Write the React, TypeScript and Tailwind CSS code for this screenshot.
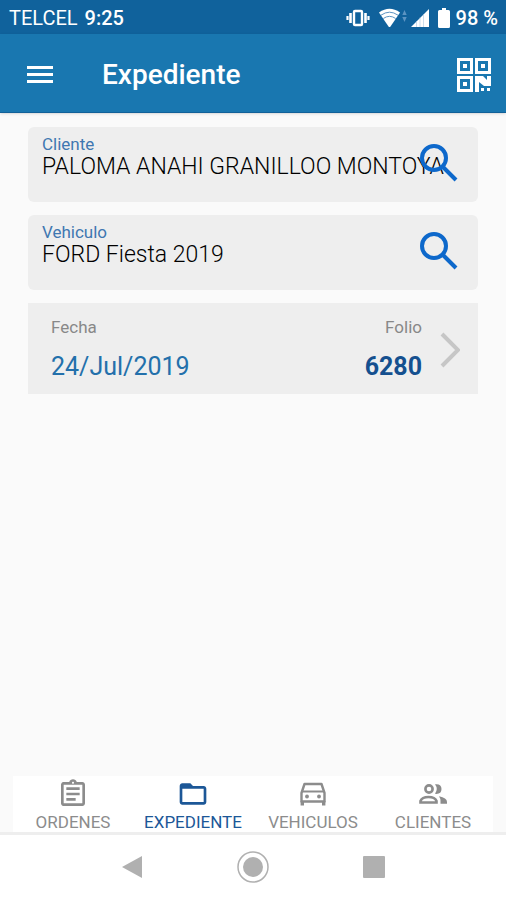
import type { ReactNode } from 'react';
import clsx from 'clsx';
import { MdFolderOpen, MdOutlineAssignment } from 'react-icons/md';

function VibrateIcon() {
  return (
    <svg viewBox="0 0 24 18" className="h-[18px] w-6" fill="none" stroke="currentColor">
      <rect x="8" y="2" width="8" height="14" rx="1" strokeWidth="2.4" />
      <path d="M4.500 4v10M19.500 4v10" strokeWidth="2.6" />
      <path d="M1.500 7v4M22.500 7v4" strokeWidth="2.2" />
    </svg>
  );
}

function WifiIcon() {
  return (
    <svg viewBox="0 0 28 20" className="h-5 w-7">
      <path d="M0 4.500Q10.500-3 21 4.500L11.500 18.500Q10.500 19.500 9.500 18.500Z" fill="#fff" />
      <path
        d="M2 7.200Q10.500 1.200 19 7.200M4.300 10.500Q10.500 6.200 16.700 10.500"
        fill="none"
        stroke="#5c94c2"
        strokeWidth="1"
      />
      <path d="M25.500 2l2.200 5h-4.400zM25.500 14l2.200-5h-4.400z" fill="#5c94c2" />
    </svg>
  );
}

function SignalIcon() {
  return (
    <svg viewBox="0 0 18 18" className="h-[18px] w-[18px]">
      <path d="M0 18L18 0V18Z" fill="#fff" />
      <path d="M5.500 12v6M9 8.500v9.500M12.500 5v13" stroke="#a9c6df" strokeWidth="0.6" />
    </svg>
  );
}

function BatteryIcon() {
  return (
    <svg viewBox="0 0 12 20" className="h-5 w-3" fill="currentColor">
      <path d="M4 0h4v2h2.500Q12 2 12 3.500V18.500Q12 20 10.500 20h-9Q0 20 0 18.500V3.500Q0 2 1.500 2H4Z" />
    </svg>
  );
}

function QrIcon() {
  return (
    <svg viewBox="0 0 36 36" className="h-9 w-9" fill="currentColor">
      <path
        fillRule="evenodd"
        d="M1 1h16v16H1zM4 4v10h10V4zM19 1h16v16H19zM22 4v10h10V4zM1 19h16v16H1zM4 22v10h10V22z"
      />
      <path d="M7 7h4v4H7zM25 7h4v4h-4zM7 25h4v4H7z" />
      <path d="M19 19h8l4 4v-4h4v10h-7l-5-4v10h-4zM25 31h3v3h-3zM31 31h3v3h-3z" />
    </svg>
  );
}

function SearchIcon() {
  return (
    <svg viewBox="0 0 40 40" className="h-10 w-10" fill="none" stroke="currentColor">
      <circle cx="15" cy="15" r="12" strokeWidth="4" />
      <path d="M24.500 24.500L37 37" strokeWidth="4" />
    </svg>
  );
}

function CarIcon() {
  return (
    <svg viewBox="0 0 26 24" className="h-6 w-[26px]" fill="none" stroke="currentColor">
      <path d="M4.500 2h17L24.500 11v8.500h-23V11z" strokeWidth="2.400" strokeLinejoin="round" />
      <path d="M3 9.500h20" strokeWidth="2" />
      <path d="M2.300 19v4.500M23.700 19v4.500" strokeWidth="3.400" />
      <g fill="currentColor" stroke="none">
        <circle cx="7" cy="14.500" r="1.900" />
        <circle cx="19" cy="14.500" r="1.900" />
      </g>
    </svg>
  );
}

function PeopleIcon() {
  return (
    <svg viewBox="0 0 28 20" className="h-5 w-7" fill="none" stroke="currentColor">
      <circle cx="10" cy="5" r="3.600" strokeWidth="2.600" />
      <path d="M1.500 18.500v-1.500Q3 13 9.500 13T17.500 17v1.500z" strokeWidth="2.600" />
      <g fill="currentColor" stroke="none">
        <path d="M16 .3Q22.500-.5 22.500 5T16 9.800Q19.500 5 16 .3Z" />
        <path d="M20 12.300Q28 14 28 18v1.700h-6.500V17Q21.500 14.500 20 12.300Z" />
      </g>
    </svg>
  );
}

function SearchField({ id, label, value }: { id: string; label: string; value: string }) {
  return (
    <div className="relative h-[75px] rounded-md bg-[#eeeeee] pt-2 pl-[14px]">
      <label htmlFor={id} className="block text-[17px] leading-[18px] text-[#3f77b1]">
        {label}
      </label>
      <input
        id={id}
        defaultValue={value}
        className="block h-7 w-full bg-transparent text-[23px] font-light text-black outline-none"
      />
      <button
        type="button"
        aria-label={`Buscar ${label}`}
        className="absolute top-4 right-[19px] text-[#0d68cb]"
      >
        <SearchIcon />
      </button>
    </div>
  );
}

function Tab({ icon, label, active }: { icon: ReactNode; label: string; active?: boolean }) {
  return (
    <button
      type="button"
      className={clsx(
        'flex flex-1 flex-col items-center text-[17px] leading-5',
        active ? 'text-[#1c5797]' : 'text-[#8c8c8c]',
      )}
    >
      <span className="flex h-9 items-center text-[32px]">{icon}</span>
      {label}
    </button>
  );
}

export default function App() {
  return (
    <div className="flex min-h-screen flex-col bg-[#fafafa] font-[Roboto,sans-serif]">
      <div className="flex h-[34px] items-center justify-between bg-[#10629c] pr-2 pl-[9px] text-[20px] text-white">
        <div className="flex gap-[7px] pt-[2px]">
          <span>TELCEL</span>
          <span className="font-medium">9:25</span>
        </div>
        <div className="flex items-center pt-[2px]">
          <VibrateIcon />
          <span className="ml-[9px]">
            <WifiIcon />
          </span>
          <span className="ml-1">
            <SignalIcon />
          </span>
          <span className="ml-[9px]">
            <BatteryIcon />
          </span>
          <span className="ml-[6px] font-medium">98 %</span>
        </div>
      </div>

      <header className="flex h-[79px] items-center border-b border-[#126199] bg-[#1977b0] pt-1 pr-[14px] pl-[27px] text-white shadow-sm">
        <button type="button" aria-label="Menú">
          <svg viewBox="0 0 26 18" className="h-[18px] w-[26px]" fill="currentColor">
            <path d="M0 0h26v3H0zM0 7h26v3H0zM0 14h26v3H0z" />
          </svg>
        </button>
        <h1 className="ml-[49px] flex-1 text-[28px] font-medium">Expediente</h1>
        <button type="button" aria-label="Escanear código">
          <QrIcon />
        </button>
      </header>

      <main className="flex flex-1 flex-col gap-[13px] px-7 pt-[14px]">
        <SearchField id="cliente" label="Cliente" value="PALOMA ANAHI GRANILLOO MONTOYA" />
        <SearchField id="vehiculo" label="Vehiculo" value="FORD Fiesta 2019" />
        <button
          type="button"
          className="flex h-[91px] items-center bg-[#eeeeee] pt-[2px] pr-[18px] pl-[23px] text-left"
        >
          <span className="flex flex-1 flex-col gap-[14px]">
            <span className="text-[17px] leading-5 text-[#888888]">Fecha</span>
            <span className="text-[25px] leading-8 text-[#2370ab]">24/Jul/2019</span>
          </span>
          <span className="flex flex-col gap-[14px] text-right">
            <span className="text-[17px] leading-5 text-[#888888]">Folio</span>
            <span className="text-[25px] leading-8 font-bold text-[#15508f]">6280</span>
          </span>
          <svg
            viewBox="0 0 20 36"
            className="ml-[18px] h-9 w-5"
            fill="none"
            stroke="#c6c6c6"
            strokeWidth="4"
          >
            <path d="M2 2L18 18L2 34" />
          </svg>
        </button>
      </main>

      <nav className="mx-[13px] flex h-14 bg-white">
        <Tab icon={<MdOutlineAssignment />} label="ORDENES" />
        <Tab icon={<MdFolderOpen />} label="EXPEDIENTE" active />
        <Tab icon={<CarIcon />} label="VEHICULOS" />
        <Tab icon={<PeopleIcon />} label="CLIENTES" />
      </nav>

      <div className="flex h-[68px] items-center justify-center gap-[94px] border-t-3 border-[#eeeeee] bg-white pb-[2px] text-[#b0b0b0]">
        <button type="button" aria-label="Atrás">
          <svg viewBox="0 0 22 24" className="h-6 w-[22px]" fill="currentColor">
            <path d="M1 12L21 1V23Z" />
          </svg>
        </button>
        <button type="button" aria-label="Inicio">
          <svg viewBox="0 0 32 32" className="h-8 w-8">
            <circle cx="16" cy="16" r="15" fill="none" stroke="currentColor" strokeWidth="1.500" />
            <circle cx="16" cy="16" r="10" fill="currentColor" />
          </svg>
        </button>
        <button type="button" aria-label="Recientes">
          <svg viewBox="0 0 22 22" className="h-[22px] w-[22px]" fill="currentColor">
            <rect width="22" height="22" rx="1" />
          </svg>
        </button>
      </div>
    </div>
  );
}
